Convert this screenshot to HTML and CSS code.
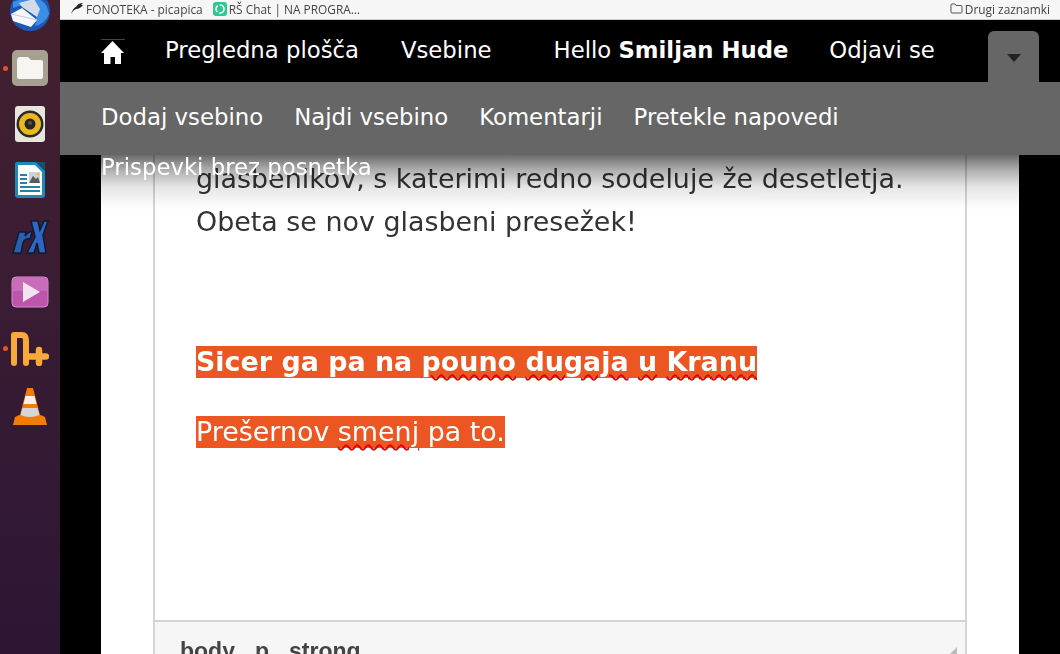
FILE: index.html
```html
<!DOCTYPE html>
<html lang="sl">
<head>
<meta charset="utf-8">
<title>FONOTEKA</title>
<link rel="stylesheet" href="styles.css">
</head>
<body>
<div class="screen">
  <aside class="dock">
    <div class="dock-item dock-first">
      <svg width="42" height="32" viewBox="0 0 42 32"><circle cx="21" cy="11" r="20" fill="#1d58b8"/><path d="M4 2 Q12 -2 30 -1 Q39 4 40 14 Q36 24 26 26 Q30 14 22 6 Q12 4 4 8 Z" fill="#3d8fe6"/><path d="M2 14 L13 8 L28 20 L22 27 L4 21 Z" fill="#f8f8fa"/><path d="M10 3 L25 -1 L31 9 L28 17 L13 7 Z" fill="#d4dbe8"/><path d="M2 14 L15 17 L28 20" fill="none" stroke="#c4cad6" stroke-width="1"/></svg>
    </div>
    <div class="dock-item dock-active">
      <svg width="38" height="38" viewBox="0 0 38 38"><rect x="1" y="1" width="36" height="36" rx="5" fill="#a5a08f"/><path d="M6 12 Q6 8 9 8 H17 L20 11 H30 Q32 11 32 13 V28 Q32 30 30 30 H8 Q6 30 6 28 Z" fill="#f6f5f2"/></svg>
    </div>
    <div class="dock-item">
      <svg width="32" height="38" viewBox="0 0 32 38"><rect x="1" y="1" width="30" height="36" rx="3" fill="#e8e5dc"/><circle cx="16" cy="19" r="13.5" fill="#2c2a26"/><circle cx="16" cy="19" r="11" fill="#eab71c"/><circle cx="16" cy="19" r="5.5" fill="#27251f"/><circle cx="16" cy="18" r="2" fill="#57534a"/></svg>
    </div>
    <div class="dock-item">
      <svg width="32" height="38" viewBox="0 0 32 38"><path d="M3 1 H22 L31 10 V34 Q31 37 28 37 H4 Q1 37 1 34 V3 Q1 1 3 1 Z" fill="#1d8bb8"/><path d="M22 1 L31 1 V10 Z" fill="#14506e"/><path d="M4 4 H21 L28 11 V34 H4 Z" fill="#fdfdfd"/><rect x="6" y="13" width="7" height="2" fill="#2284ad"/><rect x="6" y="17" width="7" height="2" fill="#2284ad"/><rect x="6" y="21" width="7" height="2" fill="#2284ad"/><rect x="15" y="11" width="11" height="11" fill="#c8d4da"/><path d="M15 22 L19 15 L22 18 L24 16 L26 22 Z" fill="#5c5a50"/><circle cx="24" cy="13" r="1.5" fill="#eac23a"/><rect x="6" y="25" width="20" height="2" fill="#2284ad"/><rect x="6" y="29" width="20" height="2" fill="#2284ad"/></svg>
    </div>
    <div class="dock-item dock-rx">
      <svg width="38" height="36" viewBox="0 0 38 36"><path d="M2 33 L8 12 H15 L14 16 Q18 11 21 12 L19 19 Q14 18 12 23 L10 33 Z" fill="#2b5fb4" stroke="#101a33" stroke-width="1.5"/><path d="M16 33 L24 17 L20 1 H27 L29 10 L33 1 H37 L32 15 L35 33 H28 L26 23 L23 33 Z" fill="#2e66c4" stroke="#101a33" stroke-width="1.5"/></svg>
    </div>
    <div class="dock-item">
      <svg width="38" height="32" viewBox="0 0 38 32"><rect x="1" y="1" width="36" height="30" rx="4" fill="#bd55ab" stroke="#d98ccb" stroke-width="1"/><path d="M2 15 H36 V5 Q36 2 33 2 H5 Q2 2 2 5 Z" fill="#c96dba"/><path d="M12 6 L29 16 L12 26 Z" fill="#f3e2f0"/></svg>
    </div>
    <div class="dock-item dock-active dock-n">
      <svg width="38" height="34" viewBox="0 0 38 34"><path d="M3 31 V3 H11 Q15 3 15 9 V31" fill="none" stroke="#f9a83a" stroke-width="6" stroke-linecap="round" stroke-linejoin="round"/><path d="M18 24.5 H35 M28 18 V31" fill="none" stroke="#f9a83a" stroke-width="6.5" stroke-linecap="round"/></svg>
    </div>
    <div class="dock-item dock-last">
      <svg width="36" height="40" viewBox="0 0 36 40"><path d="M15 1 H21 L29 32 H7 Z" fill="#f07d0a"/><path d="M13.5 9 H22.5 L24.5 17 H11.5 Z" fill="#f4f0ea"/><path d="M10.5 21 H25.5 L27.5 28 Q18 32 8.5 28 Z" fill="#d6d6d6"/><path d="M3 30 L7 28 Q18 35 29 28 L33 30 L35 38 H1 Z" fill="#f07d0a"/></svg>
    </div>
  </aside>
  <div class="browser">
    <nav class="bookmarks">
      <div class="bm-left">
        <span class="bm">
          <svg class="bm-ico" width="14" height="13" viewBox="0 0 14 13"><path d="M1 12 Q3 6 6 5 Q8 1 13 1 L11 3 L13 3 Q10 7 6 7 Q3 8 1 12 Z" fill="#222"/></svg>
          FONOTEKA - picapica
        </span>
        <span class="bm bm-chat">
          <svg class="bm-ico" width="14" height="14" viewBox="0 0 14 14"><rect width="14" height="14" rx="3" fill="#2cc990"/><circle cx="7" cy="7" r="4" fill="none" stroke="#fff" stroke-width="1.6" stroke-dasharray="7 2"/></svg>
          RŠ Chat | NA PROGRA…
        </span>
      </div>
      <span class="bm bm-right">
        <svg class="bm-ico" width="13" height="11" viewBox="0 0 13 11"><path d="M1 2 Q1 1 2 1 H5 L6 2.5 H11 Q12 2.5 12 3.5 V9 Q12 10 11 10 H2 Q1 10 1 9 Z" fill="none" stroke="#555" stroke-width="1"/></svg>
        Drugi zaznamki
      </span>
    </nav>
    <div class="viewport">
      <header class="topbar">
        <div class="primary">
          <a class="home" aria-label="Domov">
            <svg width="24" height="26" viewBox="0 0 24 26"><rect x="0" y="0" width="24" height="1" fill="#444"/><path d="M11.5 2 L23 14 H20 V25 H14 V18 H9.5 V25 H3 V14 H0 Z" fill="#fff"/></svg>
          </a>
          <a class="pri-link pri-dash">Pregledna plošča</a>
          <a class="pri-link pri-content">Vsebine</a>
          <span class="pri-link pri-hello">Hello <strong>Smiljan Hude</strong></span>
          <a class="pri-link pri-logout">Odjavi se</a>
          <div class="toggle"><span class="caret"></span></div>
        </div>
        <div class="secondary">
          <div class="sec-row">
            <a class="sec-link">Dodaj vsebino</a>
            <a class="sec-link">Najdi vsebino</a>
            <a class="sec-link">Komentarji</a>
            <a class="sec-link">Pretekle napovedi</a>
          </div>
        </div>
        <div class="sec-overflow"><a class="sec-link">Prispevki brez posnetka</a></div>
      </header>
      <main class="sheet">
        <section class="editor">
          <div class="editor-body">
            <p class="para">glasbenikov, s katerimi redno sodeluje že desetletja.<br>Obeta se nov glasbeni presežek!</p>
            <p class="hl-line hl-first"><strong class="hl">Sicer ga pa na <span class="typo">pouno</span> <span class="typo">dugaja</span> <span class="typo">u</span> <span class="typo">Kranu</span></strong></p>
            <p class="hl-line"><span class="hl">Prešernov <span class="typo">smenj</span> pa to.</span></p>
          </div>
          <footer class="statusbar">
            <span class="path">body</span><span class="path">p</span><span class="path">strong</span>
            <span class="grip"></span>
          </footer>
        </section>
      </main>
      <div class="shade"></div>
    </div>
  </div>
</div>
</body>
</html>
```

FILE: styles.css
```css
* { box-sizing: border-box; }
html, body { margin: 0; padding: 0; height: 100%; overflow: hidden; }
body { font-family: "DejaVu Sans", sans-serif; background: #000; }
.screen { display: flex; width: 1060px; height: 654px; overflow: hidden; }

.dock {
  width: 60px; flex: none; display: flex; flex-direction: column; align-items: center;
  background: linear-gradient(180deg, #42202e 0%, #3a1c33 45%, #2c1633 100%);
}
.dock-item { height: 56px; width: 60px; display: flex; align-items: center; justify-content: center; position: relative; flex: none; }
.dock-first { height: 40px; align-items: flex-start; }
.dock-rx { padding-top: 4px; }
.dock-n { padding-top: 2px; }
.dock-last { padding-top: 5px; }
.dock-active::before { content: ""; position: absolute; left: 3px; top: 50%; margin-top: -2px; width: 5px; height: 5px; border-radius: 50%; background: #e95420; }

.browser { flex: 1; min-width: 0; display: flex; flex-direction: column; }
.bookmarks {
  height: 20px; flex: none; display: flex; justify-content: space-between; align-items: center;
  background: #f6f6f6; border-bottom: 1px solid #cfcfcf; padding: 0 10px 2px 10px;
  font: 11.9px "Open Sans", "Noto Sans", sans-serif; color: #444;
}
.bm-left { display: flex; gap: 10px; }
.bm { display: inline-flex; align-items: center; gap: 2px; white-space: nowrap; }
.bm-ico { flex: none; }

.viewport { flex: 1; position: relative; overflow: hidden; background: #000; }
.topbar { position: absolute; left: 0; right: 0; top: 0; z-index: 3; }
.primary { height: 62px; background: #000; display: flex; align-items: center; color: #fff; font-size: 22.75px; position: relative; padding: 0 0 2px 41px; }
.home { display: flex; width: 24px; height: 26px; margin-top: 3px; }
.pri-link { white-space: nowrap; color: #fff; }
.pri-dash { margin-left: 40px; }
.pri-content { margin-left: 42px; }
.pri-hello { margin-left: 62px; }
.pri-logout { margin-left: 41px; }
.toggle { position: absolute; left: 928px; top: 11px; width: 51px; height: 51px; background: #666; border-radius: 6px 6px 0 0; display: flex; align-items: center; justify-content: center; }
.caret { width: 0; height: 0; border-left: 7px solid transparent; border-right: 7px solid transparent; border-top: 8px solid #222; margin-top: 2px; }

.secondary { height: 73px; background: #666; color: #fff; font-size: 22.8px; padding: 22px 0 0 41px; }
.sec-row { display: flex; gap: 31px; }
.sec-link { color: #fff; white-space: nowrap; }
.sec-overflow { position: absolute; left: 41px; top: 134px; font-size: 22.8px; line-height: 27px; color: #fff; z-index: 5; }

.sheet { position: absolute; left: 41px; top: 0; width: 918px; height: 100%; background: #fff; padding-left: 52px; padding-right: 52px; }
.editor { height: 100%; border-left: 2px solid #d4d4d4; border-right: 2px solid #d4d4d4; display: flex; flex-direction: column; background: #fff; }
.editor-body { flex: 1; padding: 137px 40px 0 41px; color: #333; font-size: 26.9px; line-height: 43px; }
.para { margin: 0 0 100px; white-space: nowrap; }
.hl-line { margin: 0 0 32px; line-height: 38px; color: #fff; }
.hl { background: #ec5622; color: #fff; padding: 0 0 1px; }
.typo { text-decoration: underline wavy #e00000 1.5px; text-underline-offset: 3px; }
.statusbar { height: 34px; flex: none; border-top: 2px solid #d4d4d4; background: #f6f6f6; padding: 16px 0 0 25px; font: bold 23px/26px "Liberation Sans", sans-serif; color: #444; position: relative; display: flex; gap: 20px; overflow: hidden; }
.grip { position: absolute; right: 8px; top: 25px; width: 0; height: 0; border-left: 7px solid transparent; border-bottom: 7px solid #bbb; }
.shade { position: absolute; left: 0; right: 0; top: 135px; height: 55px; background: linear-gradient(180deg, #6c6c6c 0%, #b0b0b0 28%, #e5e5e5 58%, #fafafa 90%, #fff 100%); mix-blend-mode: multiply; z-index: 2; pointer-events: none; }
```
